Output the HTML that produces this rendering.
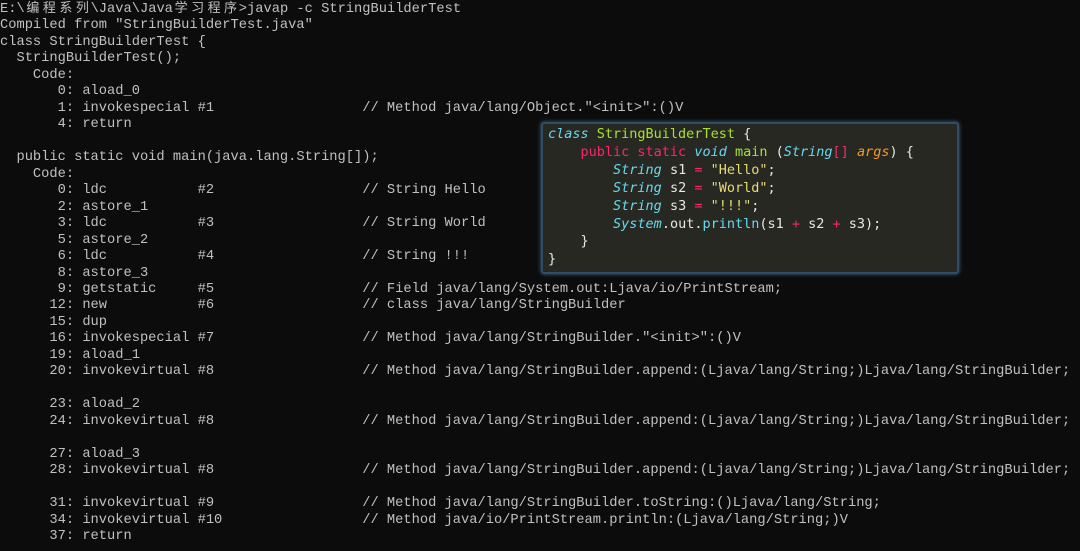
<!DOCTYPE html>
<html><head><meta charset="utf-8"><style>
html,body{margin:0;padding:0;background:#0c0c0c;width:1080px;height:551px;overflow:hidden}
pre{margin:0;position:absolute;left:0;top:-1px;font-family:"Liberation Mono",monospace;font-size:13.73px;line-height:16.47px;color:#c0c0c0;white-space:pre}
.c{display:inline-block;width:16.48px;font-family:"Noto Sans CJK SC",sans-serif;font-size:13px;text-align:center}
.box{position:absolute;left:541px;top:122px;width:414px;height:148px;background:#272822;border:2px solid #2f4d66;border-radius:3px;box-shadow:0 0 4px #3d6a8c}
.box pre{left:5px;top:2px;line-height:17.9px;color:#e8e8e0;font-family:"DejaVu Sans Mono","Liberation Mono",monospace;font-size:13.5px}
.k{color:#66d9ef;font-style:italic}.g{color:#a6e22e}.p{color:#f92672}.o{color:#fd971f;font-style:italic}.s{color:#e6db74}
</style></head><body>
<pre>E:\<span class="c">编</span><span class="c">程</span><span class="c">系</span><span class="c">列</span>\Java\Java<span class="c">学</span><span class="c">习</span><span class="c">程</span><span class="c">序</span>&gt;javap -c StringBuilderTest
Compiled from "StringBuilderTest.java"
class StringBuilderTest {
  StringBuilderTest();
    Code:
       0: aload_0
       1: invokespecial #1                  // Method java/lang/Object."&lt;init&gt;":()V
       4: return

  public static void main(java.lang.String[]);
    Code:
       0: ldc           #2                  // String Hello
       2: astore_1
       3: ldc           #3                  // String World
       5: astore_2
       6: ldc           #4                  // String !!!
       8: astore_3
       9: getstatic     #5                  // Field java/lang/System.out:Ljava/io/PrintStream;
      12: new           #6                  // class java/lang/StringBuilder
      15: dup
      16: invokespecial #7                  // Method java/lang/StringBuilder."&lt;init&gt;":()V
      19: aload_1
      20: invokevirtual #8                  // Method java/lang/StringBuilder.append:(Ljava/lang/String;)Ljava/lang/StringBuilder;

      23: aload_2
      24: invokevirtual #8                  // Method java/lang/StringBuilder.append:(Ljava/lang/String;)Ljava/lang/StringBuilder;

      27: aload_3
      28: invokevirtual #8                  // Method java/lang/StringBuilder.append:(Ljava/lang/String;)Ljava/lang/StringBuilder;

      31: invokevirtual #9                  // Method java/lang/StringBuilder.toString:()Ljava/lang/String;
      34: invokevirtual #10                 // Method java/io/PrintStream.println:(Ljava/lang/String;)V
      37: return
</pre>
<div class="box"><pre><span class="k">class</span> <span class="g">StringBuilderTest</span> {
    <span class="p">public static</span> <span class="k">void</span> <span class="g">main</span> (<span class="k">String</span><span class="p">[]</span> <span class="o">args</span>) {
        <span class="k">String</span> s1 <span class="p">=</span> <span class="s">"Hello"</span>;
        <span class="k">String</span> s2 <span class="p">=</span> <span class="s">"World"</span>;
        <span class="k">String</span> s3 <span class="p">=</span> <span class="s">"!!!"</span>;
        <span class="k">System</span>.out.<span class="k" style="font-style:normal">println</span>(s1 <span class="p">+</span> s2 <span class="p">+</span> s3);
    }
}</pre></div>
</body></html>
